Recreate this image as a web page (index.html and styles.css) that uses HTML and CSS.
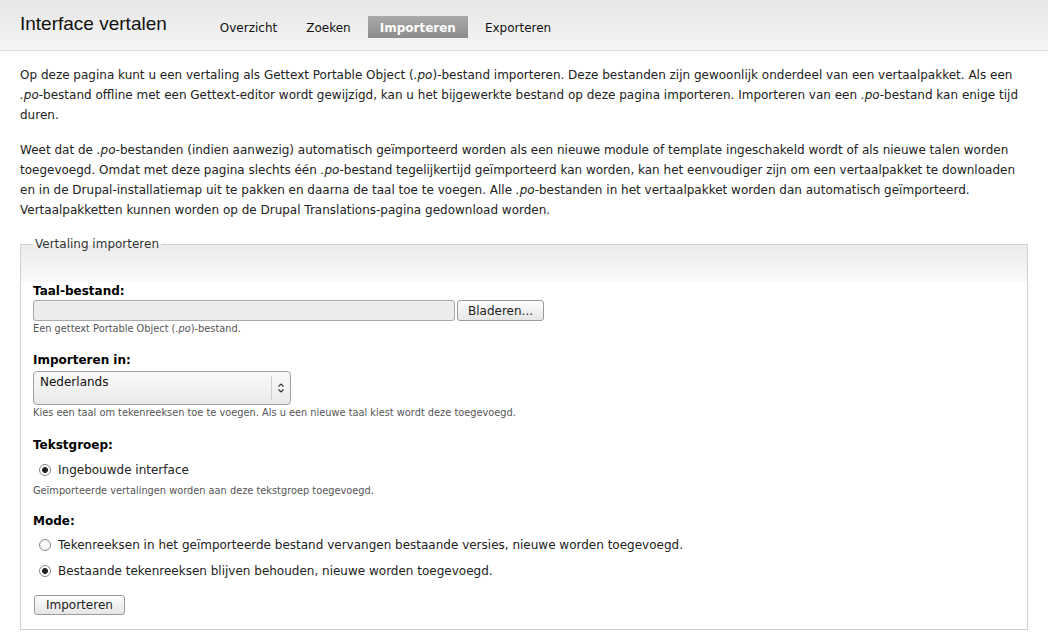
FILE: index.html
```html
<!DOCTYPE html>
<html lang="nl">
<head>
<meta charset="utf-8">
<title>Interface vertalen</title>
<link rel="stylesheet" href="styles.css">
</head>
<body>
<header class="branding">
  <h1 class="page-title">Interface vertalen</h1>
  <ul class="tabs">
    <li><a href="#">Overzicht</a></li>
    <li><a href="#">Zoeken</a></li>
    <li class="active"><a href="#">Importeren</a></li>
    <li><a href="#">Exporteren</a></li>
  </ul>
</header>
<main class="page">
  <p>Op deze pagina kunt u een vertaling als Gettext Portable Object (<em>.po</em>)-bestand importeren. Deze bestanden zijn gewoonlijk onderdeel van een vertaalpakket. Als een <em>.po</em>-bestand offline met een Gettext-editor wordt gewijzigd, kan u het bijgewerkte bestand op deze pagina importeren. Importeren van een <em>.po</em>-bestand kan enige tijd duren.</p>
  <p>Weet dat de <em>.po</em>-bestanden (indien aanwezig) automatisch geïmporteerd worden als een nieuwe module of template ingeschakeld wordt of als nieuwe talen worden toegevoegd. Omdat met deze pagina slechts één <em>.po</em>-bestand tegelijkertijd geïmporteerd kan worden, kan het eenvoudiger zijn om een vertaalpakket te downloaden en in de Drupal-installatiemap uit te pakken en daarna de taal toe te voegen. Alle <em>.po</em>-bestanden in het vertaalpakket worden dan automatisch geïmporteerd. Vertaalpakketten kunnen worden op de Drupal Translations-pagina gedownload worden.</p>

  <form class="import-form">
    <fieldset class="fieldset">
      <legend>Vertaling importeren</legend>
      <div class="fieldset-body">
        <div class="form-item">
          <label class="field-label" for="file">Taal-bestand:</label>
          <div class="file-row">
            <span class="file-box" id="file"></span>
            <button type="button" class="btn">Bladeren...</button>
          </div>
          <div class="description">Een gettext Portable Object (<em>.po</em>)-bestand.</div>
        </div>

        <div class="form-item select-item">
          <label class="field-label" for="langcode">Importeren in:</label>
          <div class="select-wrap">
            <select id="langcode" class="select">
              <option>Nederlands</option>
            </select>
            <span class="select-arrow">
              <svg width="8" height="12" viewBox="0 0 8 12"><path d="M1.5 4.5 L4 2 L6.5 4.5 M1.5 7.5 L4 10 L6.5 7.5" fill="none" stroke="#333" stroke-width="1.2"/></svg>
            </span>
          </div>
          <div class="description">Kies een taal om tekenreeksen toe te voegen. Als u een nieuwe taal kiest wordt deze toegevoegd.</div>
        </div>

        <div class="form-item group-item">
          <div class="field-label">Tekstgroep:</div>
          <div class="radios">
            <label class="radio-row"><input type="radio" name="group" class="radio" checked> Ingebouwde interface</label>
          </div>
          <div class="description after-radios">Geïmporteerde vertalingen worden aan deze tekstgroep toegevoegd.</div>
        </div>

        <div class="form-item last">
          <div class="field-label">Mode:</div>
          <div class="radios tight">
            <label class="radio-row"><input type="radio" name="mode" class="radio"> Tekenreeksen in het geïmporteerde bestand vervangen bestaande versies, nieuwe worden toegevoegd.</label>
            <label class="radio-row"><input type="radio" name="mode" class="radio" checked> Bestaande tekenreeksen blijven behouden, nieuwe worden toegevoegd.</label>
          </div>
        </div>

        <div class="form-actions">
          <button type="button" class="btn submit">Importeren</button>
        </div>
      </div>
    </fieldset>
  </form>
</main>
</body>
</html>
```
FILE: styles.css
```css
html, body {
  margin: 0;
  padding: 0;
}
body {
  background: #fff;
  color: #333;
  font-family: "DejaVu Sans", Verdana, sans-serif;
  font-size: 12px;
}
.branding {
  display: flex;
  align-items: flex-start;
  height: 51px;
  box-sizing: border-box;
  padding: 0 20px;
  background: linear-gradient(#e6e6e6, #f5f5f5);
  border-bottom: 1px solid #dddddd;
}
.page-title {
  margin: 13px 0 0;
  font-family: "Liberation Sans", Arial, sans-serif;
  font-weight: normal;
  font-size: 19px;
  color: #111;
  line-height: 22px;
}
.tabs {
  display: flex;
  gap: 5px;
  list-style: none;
  margin: 16px 0 0 41px;
  padding: 0;
}
.tabs li a {
  display: block;
  padding: 1px 12px 0;
  height: 21px;
  line-height: 23px;
  color: #111;
  text-decoration: none;
  font-size: 12px;
}
.tabs li.active a {
  background: linear-gradient(#a9a9a9, #8c8c8c);
  color: #fff;
  font-weight: bold;
}
.page {
  padding: 14px 20px 0;
}
.page p {
  margin: 0 0 15px;
  line-height: 20px;
  color: #222;
}
.import-form {
  padding-top: 2px;
}
.fieldset {
  margin: 0;
  padding: 0;
  border: 1px solid #cfcfcf;
  background: linear-gradient(#ebebeb, #f9f9f9 36px, #fff 38px);
  min-width: 0;
}
.fieldset legend {
  padding: 0 2px;
  margin-left: 12px;
  color: #333;
  font-size: 12px;
}
.fieldset-body {
  padding: 33px 12px 14px;
}
.form-item {
  display: flex;
  flex-direction: column;
  align-items: flex-start;
  margin-bottom: 18px;
}
.form-item.select-item {
  margin-bottom: 19px;
}
.form-item.group-item {
  margin-bottom: 17px;
}
.form-item.last {
  margin-bottom: 14px;
}
.field-label {
  display: block;
  font-weight: bold;
  color: #000;
  font-size: 12px;
  margin-bottom: 3px;
  line-height: 15px;
}
.group-item .field-label {
  margin-bottom: 2px;
}
.file-row {
  display: flex;
  gap: 2px;
  align-items: center;
  margin-top: -2px;
}
.file-box {
  display: block;
  width: 420px;
  height: 19px;
  border: 1px solid #a9a9a9;
  border-radius: 3px;
  background: #ececec;
}
.btn {
  font-family: "DejaVu Sans", sans-serif;
  font-size: 12px;
  color: #222;
  height: 21px;
  padding: 0 10px;
  border: 1px solid #9a9a9a;
  border-radius: 3px;
  background: linear-gradient(#fdfdfd, #e6e6e6);
}
.description {
  font-size: 9.8px;
  color: #555;
  margin-top: 2px;
  line-height: 12px;
}
.description.after-radios {
  margin-top: 5px;
}
.select-wrap {
  position: relative;
  width: 258px;
}
.select {
  appearance: none;
  -webkit-appearance: none;
  display: block;
  width: 258px;
  height: 34px;
  box-sizing: border-box;
  padding: 2px 30px 14px 6px;
  border: 1px solid #a0a0a0;
  border-radius: 4px;
  background: linear-gradient(#fafafa, #e9e9e9);
  font-family: "DejaVu Sans", sans-serif;
  font-size: 12px;
  color: #111;
}
.select-arrow {
  position: absolute;
  right: 1px;
  top: 5px;
  width: 18px;
  height: 24px;
  border-left: 1px solid #cfcfcf;
  display: flex;
  align-items: center;
  justify-content: center;
  pointer-events: none;
}
.radios {
  display: flex;
  flex-direction: column;
  gap: 6px;
  margin-top: 5px;
}
.radios.tight {
  margin-top: 3px;
}
.radio-row {
  display: flex;
  align-items: center;
  gap: 7px;
  padding-left: 6px;
  height: 20px;
  color: #222;
  font-size: 12px;
}
.radio {
  appearance: none;
  -webkit-appearance: none;
  margin: 0;
  width: 12px;
  height: 12px;
  border: 1px solid #8a8a8a;
  border-radius: 50%;
  background: radial-gradient(#fff, #eee);
  box-sizing: border-box;
}
.radio:checked {
  background: radial-gradient(circle, #222 0, #222 2.6px, #fff 3.2px);
}
.form-actions {
  display: flex;
}
.submit {
  height: 20px;
  padding: 0 11px;
  margin-left: 1px;
}
```
